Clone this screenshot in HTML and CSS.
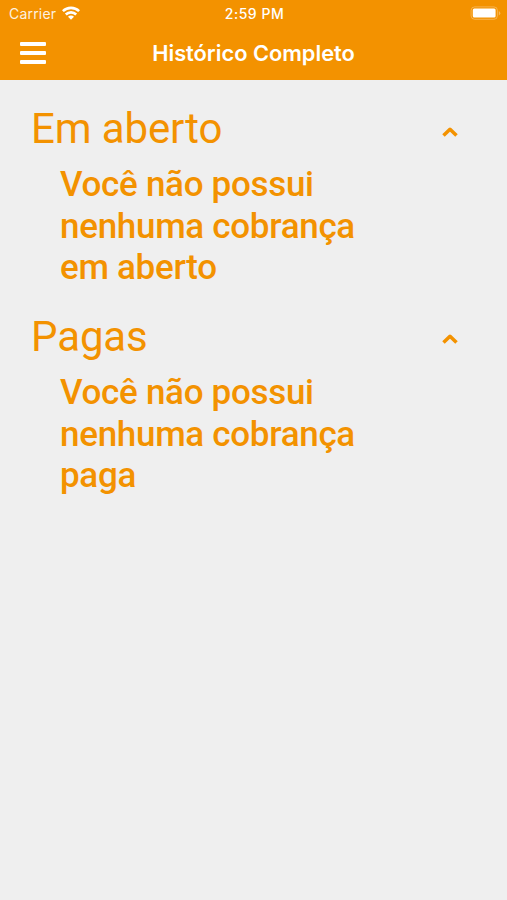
FILE: index.html
```html
<!DOCTYPE html>
<html lang="pt-BR">
<head>
<meta charset="utf-8">
<title>Histórico Completo</title>
<link rel="stylesheet" href="styles.css">
</head>
<body>
<header class="header">
  <div class="status">
    <div class="carrier"><span class="carrier-name">Carrier</span>
      <svg class="wifi" viewBox="0 0 18 14" width="18" height="14"><g fill="none" stroke="#fff" stroke-width="2.6"><path d="M.9 5.2a11.5 11.5 0 0 1 16.2 0"/><path d="M3.8 8.5a7.4 7.4 0 0 1 10.4 0"/></g><path d="M9 13.8l-3-3.1a4.2 4.2 0 0 1 6 0z" fill="#fff"/></svg>
    </div>
    <div class="time"><span>2:59 PM</span></div>
    <div class="power">
      <svg viewBox="0 0 31 14" width="31" height="14"><rect x="1.1" y=".9" width="26.3" height="12.4" rx="3.5" fill="none" stroke="#fff" stroke-opacity=".3"/><rect x="2.8" y="2.6" width="22.8" height="9" rx="1.5" fill="#fff"/><path d="M28.8 5q1.5.8 1.5 2.3t-1.5 2.3z" fill="#fff" opacity=".35"/></svg>
    </div>
  </div>
  <div class="bar">
    <button class="menu" aria-label="Menu"><i></i><i></i><i></i></button>
    <h1 class="title"><span>Histórico Completo</span></h1>
  </div>
</header>
<main class="content">
  <section class="group">
    <div class="heading"><h2>Em aberto</h2>
      <svg class="chevron" viewBox="0 0 16 10" width="16" height="10"><path d="M1.5 8.5L8 2.3l6.5 6.2"/></svg>
    </div>
    <p>Você não possui<br>nenhuma cobrança<br>em aberto</p>
  </section>
  <section class="group">
    <div class="heading"><h2>Pagas</h2>
      <svg class="chevron" viewBox="0 0 16 10" width="16" height="10"><path d="M1.5 8.5L8 2.3l6.5 6.2"/></svg>
    </div>
    <p>Você não possui<br>nenhuma cobrança<br>paga</p>
  </section>
</main>
</body>
</html>
```
FILE: styles.css
```css
* { box-sizing: border-box; }
body { margin: 0; min-height: 900px; background: #efefef; color: #f39200; font-family: Roboto, sans-serif; }
.header { height: 80px; background: #f39200; color: #fff; }
.status { display: grid; grid-template-columns: 1fr auto 1fr; height: 27px; align-items: center; padding: 0 6px 0 9px; font: 14px Inter, sans-serif; }
.carrier { display: flex; align-items: center; gap: 6px; letter-spacing: .2px; }
.carrier-name { opacity: .88; }
.wifi { margin-top: -1px; }
.time { font-weight: 500; letter-spacing: .5px; margin-right: 1px; }
.power { display: flex; justify-content: flex-end; margin-top: -1px; }
.bar { display: grid; grid-template-columns: 60px 1fr 60px; height: 51px; align-items: center; }
.menu { display: flex; flex-direction: column; gap: 5px; width: 26px; margin-left: 20px; padding: 0; border: 0; background: none; }
.menu i { width: 26px; height: 4px; border-radius: 1px; background: #fff; }
.title { margin: 0; text-align: center; font: 600 21.8px Inter, sans-serif; white-space: nowrap; }
.content { padding: 21px 48px 0 31px; }
.group { height: 207.8px; }
.heading { display: flex; justify-content: space-between; align-items: center; height: 56px; padding-right: 1px; }
.heading h2 { margin: 0; font-weight: 400; font-size: 42px; line-height: 56px; letter-spacing: -.12px; }
.chevron { margin-top: 5px; fill: none; stroke: #f39200; stroke-width: 3.6; stroke-linejoin: round; }
.group p { margin: 7px 0 0 29px; font-weight: 500; font-size: 35px; line-height: 41.7px; letter-spacing: -.3px; white-space: nowrap; }
```
